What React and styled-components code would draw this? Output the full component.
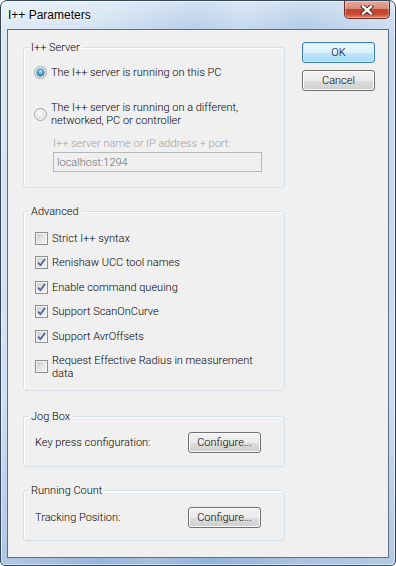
import React from 'react'
import styled, { createGlobalStyle } from 'styled-components'

const GlobalStyle = createGlobalStyle`
  html, body {
    margin: 0;
    padding: 0;
    background: #fff;
  }
  body {
    font-family: Roboto, "Liberation Sans", Arial, sans-serif;
    font-size: 11px;
    font-weight: 300;
    color: #000;
  }
`

const Window = styled.div`
  box-sizing: border-box;
  width: 396px;
  height: 566px;
  display: flex;
  flex-direction: column;
  border: 1px solid #34475e;
  border-radius: 7px 7px 5px 5px;
  overflow: hidden;
  background:
    linear-gradient(to bottom, rgba(255,255,255,0.45), rgba(255,255,255,0) 40px, rgba(255,255,255,0) 70%, rgba(60,110,175,0.2)),
    linear-gradient(100deg, #dbe8f5 0%, #cadcf0 22%, #adc8e6 40%, #bed4ec 50%, #a8c4e4 62%, #c2d7ee 80%, #cfe0f2 100%);
  box-shadow: inset 0 0 0 1px rgba(255,255,255,0.55);
`

const TitleBar = styled.div`
  flex: none;
  height: 28px;
  display: flex;
  align-items: flex-start;
  justify-content: space-between;
`

const Title = styled.div`
  font-family: "Liberation Sans", Arial, sans-serif;
  font-size: 12px;
  font-weight: 400;
  line-height: 14px;
  padding: 7px 0 0 7px;
  text-shadow: 0 0 6px #fff, 0 0 3px #fff;
`

const CloseButton = styled.div`
  box-sizing: border-box;
  width: 46px;
  height: 18px;
  margin-right: 5px;
  display: flex;
  align-items: center;
  justify-content: center;
  border: 1px solid #6b2a22;
  border-top: none;
  border-radius: 0 0 5px 5px;
  background: linear-gradient(to bottom, #e9a99b 0%, #d88b7b 45%, #c5442f 50%, #c9462f 75%, #e0826a 100%);
  box-shadow: inset 0 0 0 1px rgba(255,255,255,0.35);
`

const Client = styled.div`
  flex: 1;
  margin: 0 6px 7px 6px;
  padding: 0 13px 0 15px;
  display: flex;
  align-items: flex-start;
  gap: 17px;
  border: 1px solid #5d6e82;
  background: #f0f0f0;
`

const Groups = styled.div`
  width: 262px;
  display: flex;
  flex-direction: column;
`

const Buttons = styled.div`
  margin-top: 12px;
  display: flex;
  flex-direction: column;
  gap: 7px;
`

const Group = styled.fieldset`
  margin: ${p => p.$top}px 0 0;
  padding: ${p => p.$pad};
  border: 1px solid #d5dfe5;
  border-radius: 3px;
  box-shadow: inset 1px 1px 0 #fff;
  min-width: 0;
`

const Legend = styled.legend`
  margin-left: -6px;
  padding: 0 2px;
  line-height: 13px;
  background: #f0f0f0;
`

const OptionList = styled.div`
  display: flex;
  flex-direction: column;
  gap: ${p => p.$gap}px;
`

const Option = styled.label`
  display: flex;
  align-items: center;
  gap: 4px;
  line-height: 13px;
`

const RadioCircle = styled.span`
  position: relative;
  box-sizing: border-box;
  flex: none;
  width: 13px;
  height: 13px;
  margin-left: -1px;
  border-radius: 50%;
  border: 1px solid #a0a2a4;
  background: radial-gradient(circle at 45% 40%, #ffffff 0%, #e6e6e6 45%, #c9cacb 100%);
  box-shadow: inset 0 0 0 1px #f8f8f8;

  &::after {
    content: "";
    display: ${p => (p.$checked ? 'block' : 'none')};
    position: absolute;
    left: 2px;
    top: 2px;
    width: 7px;
    height: 7px;
    border-radius: 50%;
    background: radial-gradient(circle at 50% 35%, #b8ecff 0%, #4fa8de 40%, #1d5f93 100%);
    box-shadow: 0 0 0 0.5px #1f4c73;
  }
`

const CheckBox = styled.span`
  box-sizing: border-box;
  flex: none;
  width: 13px;
  height: 13px;
  display: flex;
  align-items: center;
  justify-content: center;
  border: 1px solid #8e8f8f;
  background: linear-gradient(135deg, #c9ccd1 0%, #e4e5e7 55%, #f7f7f7 100%);
  box-shadow: inset 0 0 0 1px #f4f4f4;
`

const Field = styled.div`
  margin: 10px 0 0 18px;
  display: flex;
  flex-direction: column;
  gap: 2px;
`

const FieldLabel = styled.div`
  line-height: 13px;
  color: #a0a0a0;
`

const TextInput = styled.div`
  box-sizing: border-box;
  width: 209px;
  height: 20px;
  padding: 0 3px;
  display: flex;
  align-items: center;
  border: 1px solid #b5b8bb;
  background: #f0f0f0;
  color: #6d6d6d;
`

const ConfigRow = styled.div`
  display: grid;
  grid-template-columns: 153px 73px;
  align-items: center;
  line-height: 13px;
`

const Button = styled.div`
  box-sizing: border-box;
  width: 73px;
  height: 21px;
  display: flex;
  align-items: center;
  justify-content: center;
  border: 1px solid ${p => (p.$default ? '#3c7fb1' : '#707070')};
  border-radius: 3px;
  background: ${p =>
    p.$default
      ? 'linear-gradient(to bottom, #eaf6fd 0%, #d9f0fc 50%, #bee6fd 51%, #a7d9f5 100%)'
      : 'linear-gradient(to bottom, #f2f2f2 0%, #ebebeb 50%, #dddddd 51%, #cfcfcf 100%)'};
  box-shadow: inset 0 0 0 1px ${p => (p.$default ? '#c6ebfb' : '#fcfcfc')};
`

const CloseGlyph = () => (
  <svg width="14" height="10" viewBox="0 0 14 10">
    <path d="M3 1.5 L11 8.5 M11 1.5 L3 8.5" stroke="#4a2620" strokeWidth="4.2" strokeLinecap="square" />
    <path d="M3 1.5 L11 8.5 M11 1.5 L3 8.5" stroke="#fff" strokeWidth="2.4" strokeLinecap="square" />
  </svg>
)

const Check = () => (
  <svg width="9" height="9" viewBox="0 0 9 9">
    <path d="M1.2 4.6 L3.4 7.2 L8 1" stroke="#4a5e9a" strokeWidth="1.7" fill="none" />
  </svg>
)

const Radio = ({ checked, children }) => (
  <Option>
    <RadioCircle $checked={checked} />
    <span>{children}</span>
  </Option>
)

const Checkbox = ({ checked, children }) => (
  <Option>
    <CheckBox>{checked && <Check />}</CheckBox>
    <span>{children}</span>
  </Option>
)

const advanced = [
  { label: 'Strict I++ syntax', checked: false },
  { label: 'Renishaw UCC tool names', checked: true },
  { label: 'Enable command queuing', checked: true },
  { label: 'Support ScanOnCurve', checked: true },
  { label: 'Support AvrOffsets', checked: true },
  { label: <>Request Effective Radius in measurement<br />data</>, checked: false },
]

export default function App() {
  return (
    <>
      <GlobalStyle />
      <Window>
        <TitleBar>
          <Title>I++ Parameters</Title>
          <CloseButton>
            <CloseGlyph />
          </CloseButton>
        </TitleBar>
        <Client>
          <Groups>
            <Group $top={11} $pad="12px 11px 15px">
              <Legend>I++ Server</Legend>
              <OptionList $gap={22}>
                <Radio checked>The I++ server is running on this PC</Radio>
                <Radio>
                  The I++ server is running on a different,
                  <br />
                  networked, PC or controller
                </Radio>
              </OptionList>
              <Field>
                <FieldLabel>I++ server name or IP address + port:</FieldLabel>
                <TextInput>localhost:1294</TextInput>
              </Field>
            </Group>

            <Group $top={17} $pad="14px 11px 10px">
              <Legend>Advanced</Legend>
              <OptionList $gap={11.4}>
                {advanced.map((item, i) => (
                  <Checkbox key={i} checked={item.checked}>
                    {item.label}
                  </Checkbox>
                ))}
              </OptionList>
            </Group>

            <Group $top={19} $pad="9px 11px 13px">
              <Legend>Jog Box</Legend>
              <ConfigRow>
                <span>Key press configuration:</span>
                <Button>Configure...</Button>
              </ConfigRow>
            </Group>

            <Group $top={17} $pad="10px 11px 12px">
              <Legend>Running Count</Legend>
              <ConfigRow>
                <span>Tracking Position:</span>
                <Button>Configure...</Button>
              </ConfigRow>
            </Group>
          </Groups>

          <Buttons>
            <Button $default>OK</Button>
            <Button>Cancel</Button>
          </Buttons>
        </Client>
      </Window>
    </>
  )
}
